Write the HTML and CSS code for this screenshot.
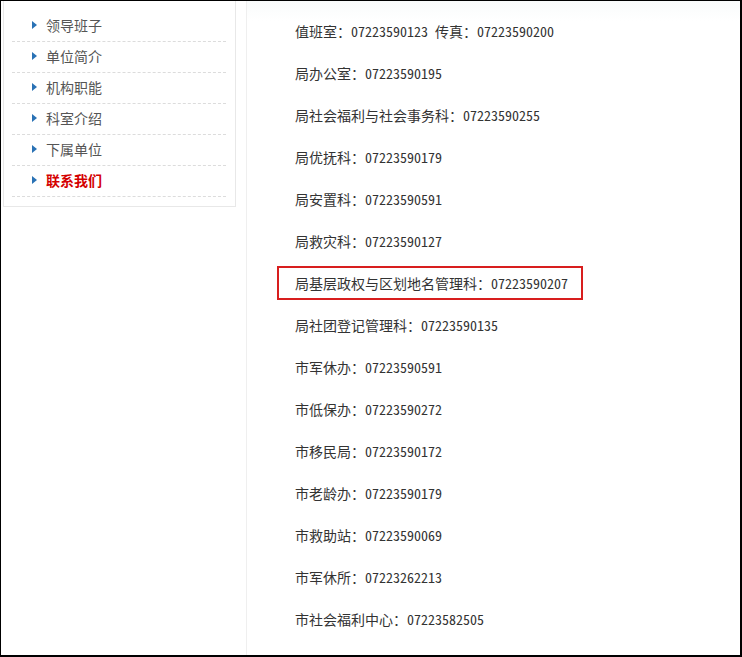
FILE: index.html
```html
<!DOCTYPE html>
<html lang="zh-CN">
<head>
  <meta charset="UTF-8" />
  <title>联系我们</title>
  <link rel="stylesheet" href="styles.css">
</head>
<body>
  <div class="frame">
    <div class="sidebar">
      <ul class="side-menu">
        <li><a href="#">领导班子</a></li>
        <li><a href="#">单位简介</a></li>
        <li><a href="#">机构职能</a></li>
        <li><a href="#">科室介绍</a></li>
        <li><a href="#">下属单位</a></li>
        <li class="active"><a href="#">联系我们</a></li>
      </ul>
    </div>

    <div class="content">
      <div class="line">值班室：07223590123 传真：07223590200</div>
      <div class="line">局办公室：07223590195</div>
      <div class="line">局社会福利与社会事务科：07223590255</div>
      <div class="line">局优抚科：07223590179</div>
      <div class="line">局安置科：07223590591</div>
      <div class="line">局救灾科：07223590127</div>
      <div class="line"><span class="mark">局基层政权与区划地名管理科：07223590207</span></div>
      <div class="line">局社团登记管理科：07223590135</div>
      <div class="line">市军休办：07223590591</div>
      <div class="line">市低保办：07223590272</div>
      <div class="line">市移民局：07223590172</div>
      <div class="line">市老龄办：07223590179</div>
      <div class="line">市救助站：07223590069</div>
      <div class="line">市军休所：07223262213</div>
      <div class="line">市社会福利中心：07223582505</div>
    </div>
  </div>
</body>
</html>
```

FILE: styles.css
```css
body {
  margin: 0;
  font-family: "Noto Sans CJK SC", "Noto Sans", sans-serif;
  background: #fff;
}
.frame {
  width: 742px;
  height: 657px;
  box-sizing: border-box;
  border-style: solid;
  border-color: #000;
  border-width: 1px 2px 2px 1px;
  display: flex;
  overflow: hidden;
}

/* left menu */
.sidebar {
  width: 245px;
  padding-left: 2px;
  box-sizing: border-box;
}
.side-menu {
  list-style: none;
  margin: 0;
  width: 233px;
  box-sizing: border-box;
  padding: 10px 9px 9px 8px;
  border: 1px solid #e8e8e8;
  border-top: none;
}
.side-menu li {
  height: 31px;
  box-sizing: border-box;
  padding: 0 0 2px 20px;
  border-bottom: 1px dashed #dcdcdc;
  display: flex;
  align-items: center;
}
.side-menu li::before {
  content: "";
  width: 0;
  height: 0;
  border-left: 5px solid #2a72b5;
  border-top: 4px solid transparent;
  border-bottom: 4px solid transparent;
  margin-right: 9px;
}
.side-menu a {
  color: #555;
  font-size: 14px;
  text-decoration: none;
}
.side-menu li.active a {
  color: #d40000;
  font-weight: bold;
}

/* right content */
.content {
  flex: 1;
  border-left: 1px solid #efefef;
  padding: 9px 0 0 48px;
  background: linear-gradient(#f9fbfb, #fff 20px);
}
.line {
  height: 42px;
  display: flex;
  align-items: center;
  font-size: 14px;
  color: #333;
  white-space: nowrap;
  font-feature-settings: "hwid" 1;
}
.mark {
  display: inline-flex;
  align-items: center;
  height: 34px;
  box-sizing: border-box;
  border: 2px solid #d81e1e;
  padding: 0 13px 0 16px;
  margin-left: -18px;
}
```
